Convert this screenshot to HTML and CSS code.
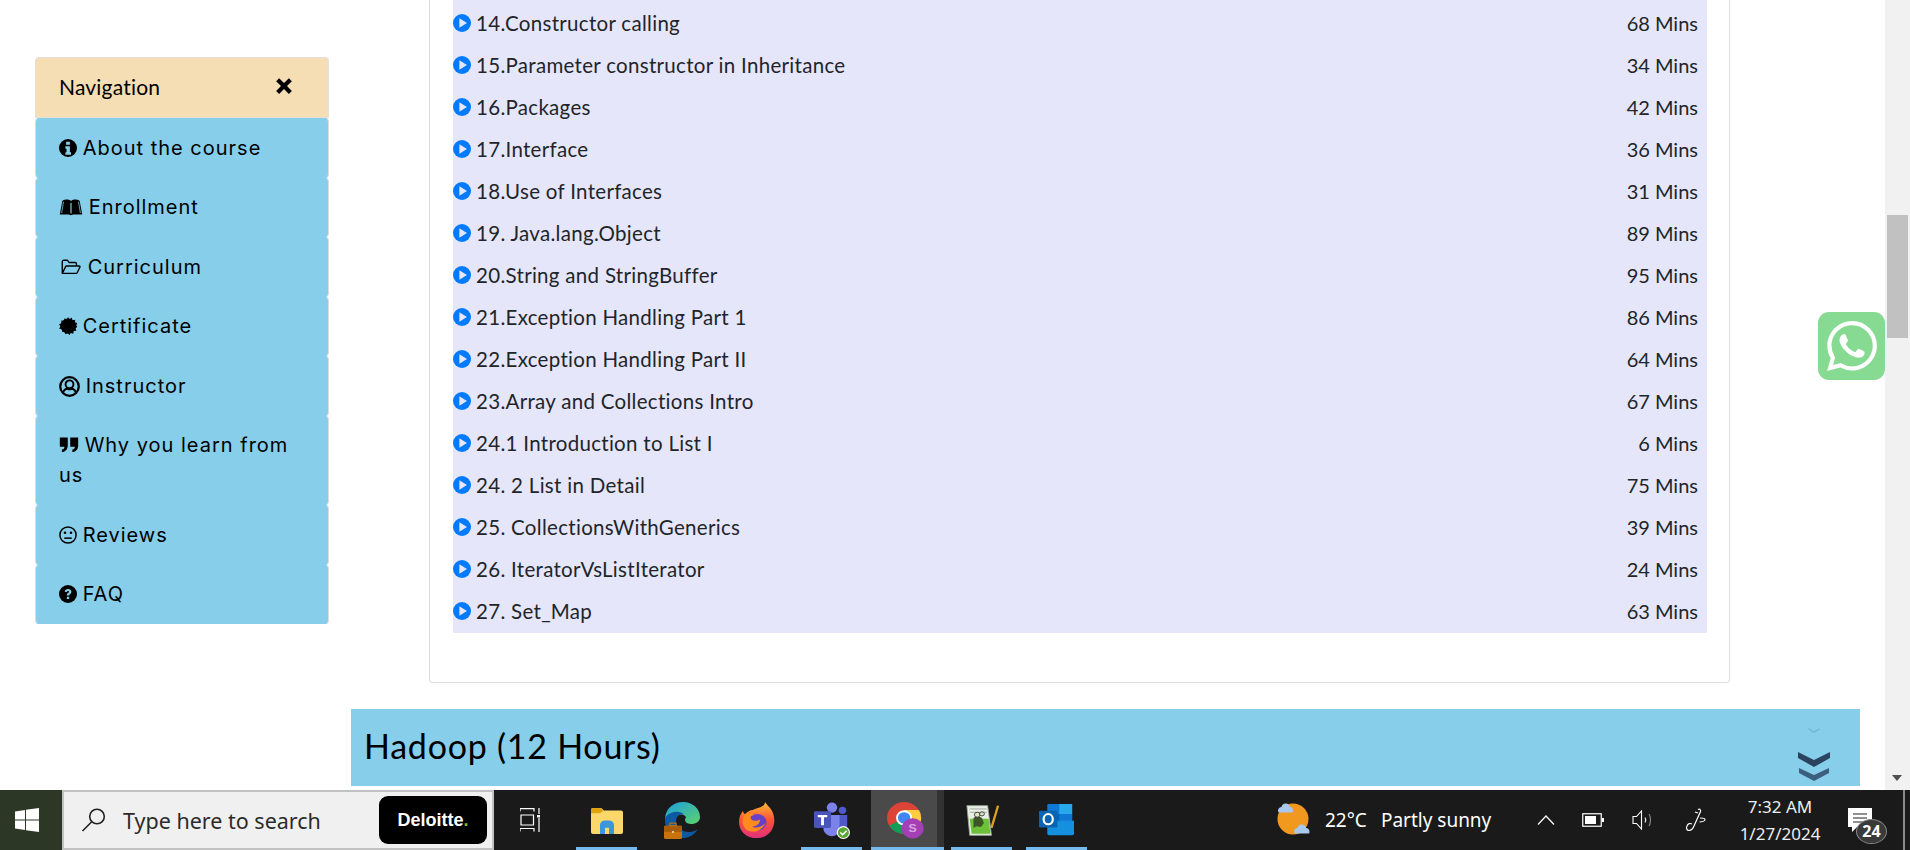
FILE: index.html
```html
<!DOCTYPE html>
<html lang="en">

<head>
    <meta charset="UTF-8">
    <meta name="viewport" content="width=device-width, initial-scale=1.0">
    <title>Course Curriculum</title>
    <link rel="stylesheet" href="styles.css">
</head>

<body>
    <svg class="defs" width="0" height="0">
        <symbol id="play" viewBox="0 0 24 24">
            <circle cx="12" cy="12" r="12" fill="#007bff" />
            <path d="M8.5 5.6 18.6 12 8.5 18.4z" fill="#e6e6fa" />
        </symbol>
    </svg>

    <div class="browser">
        <div class="page">
            <nav class="sidebar">
                <div class="nav-head">
                    <span>Navigation</span>
                    <svg class="nav-close" viewBox="0 0 24 24"><path d="M5.5 1.5 12 8l6.5-6.5 4 4L16 12l6.5 6.5-4 4L12 16l-6.500 6.500-4-4L8 12 1.500 5.500z" /></svg>
                </div>
                <a class="nav-item" href="#about">
                    <svg class="nav-icon" viewBox="0 0 24 24"><circle cx="12" cy="12" r="12" /><path d="M9.500 3.500h5v4h-5zM8.500 9.500h6v8h1.500v3.500H8.500v-3.500H10v-4.500H8.500z" fill="#87ceeb" /></svg>
                    About the course
                </a>
                <a class="nav-item" href="#enroll">
                    <svg class="nav-icon nav-icon-wide" viewBox="0 0 32 24"><path d="M1 22 4.500 3.500C8 1.500 13 1.500 16 4c3-2.500 8-2.500 11.500-.5L31 22H19l-3 1-3-1z" /><path d="M15.300 6.500v14M16.700 6.500v14" stroke="#87ceeb" stroke-width=".8" /><path d="M3.500 20 6 5" stroke="#87ceeb" stroke-width="1" /><path d="M28.500 20 26 5" stroke="#87ceeb" stroke-width="1" /></svg>
                    Enrollment
                </a>
                <a class="nav-item" href="#curriculum">
                    <svg class="nav-icon nav-icon-folder" viewBox="0 0 28 24"><path d="M3 20.500V5a2 2 0 0 1 2-2h5l2 3h8a2 2 0 0 1 2 2v3M3 20.500 7.500 11.500a1.500 1.500 0 0 1 1.300-.8H25.500c1 0 1.500.8 1 1.700l-3.600 7.200a1.500 1.500 0 0 1-1.300.9z" fill="none" stroke="#000" stroke-width="1.800" stroke-linejoin="round" /></svg>
                    Curriculum
                </a>
                <a class="nav-item" href="#certificate">
                    <svg class="nav-icon" viewBox="0 0 24 24"><circle cx="12" cy="12" r="10" /><path d="M12 0l2 3 3-2.200 1 3.500 3.600-.8-.4 3.700 3.300.7-1.600 3.100 2.100 2-2.900 1.900 1 3.400-3.600.4-.4 3.600-3.400-1-1.700 2.600-2.500-2.400-3 1.500-.9-3.500-3.600.2.400-3.600L0 15.500l2-3-2-3 3.300-1.200-.3-3.700 3.600.6.900-3.500 3 1.800z" /></svg>
                    Certificate
                </a>
                <a class="nav-item" href="#instructor">
                    <svg class="nav-icon nav-icon-user" viewBox="0 0 24 24"><circle cx="12" cy="12" r="10.600" fill="none" stroke="#000" stroke-width="2.600" /><circle cx="12" cy="9.500" r="4.500" fill="none" stroke="#000" stroke-width="2.200" /><path d="M4.500 19.500c1-3.600 3.500-5 5.300-5 1.500 1 3 1 4.400 0 1.800 0 4.300 1.400 5.300 5" fill="none" stroke="#000" stroke-width="2.200" /></svg>
                    Instructor
                </a>
                <a class="nav-item" href="#why">
                    <svg class="nav-icon nav-icon-quote" viewBox="0 0 24 20"><path d="M1 1h9.500v9.500c0 4.500-2.500 7.500-7 8v-3c2-.3 3-1.500 3-3.500H1zM13.500 1H23v9.500c0 4.500-2.500 7.500-7 8v-3c2-.3 3-1.500 3-3.500h-5.500z" /></svg>
                    Why you learn from us
                </a>
                <a class="nav-item" href="#reviews">
                    <svg class="nav-icon" viewBox="0 0 24 24"><circle cx="12" cy="12" r="10.800" fill="none" stroke="#000" stroke-width="2" /><circle cx="8" cy="9" r="1.800" /><circle cx="16" cy="9" r="1.800" /><path d="M7 16.200h10" stroke="#000" stroke-width="2" /></svg>
                    Reviews
                </a>
                <a class="nav-item" href="#faq">
                    <svg class="nav-icon" viewBox="0 0 24 24"><circle cx="12" cy="12" r="12" /><path d="M7.500 9c.3-2.600 2.200-3.800 4.600-3.800 2.500 0 4.500 1.500 4.500 3.800 0 3-3 3-3 5h-3.200c0-3.400 3-3.500 3-5 0-.7-.6-1.100-1.400-1.100-.9 0-1.400.5-1.700 1.400zM10.400 15.500h3.200v3.200h-3.200z" fill="#87ceeb" /></svg>
                    FAQ
                </a>
            </nav>

            <main class="content">
                <section class="lesson-card">
                    <ul class="lesson-list" id="lessons"></ul>
                </section>
                <div class="course-bar">
                    <h2>Hadoop (12 Hours)</h2>
                    <svg class="chevrons" viewBox="0 0 32 54">
                        <path d="M10.500 1 16 4.500 21.500 1v1.500L16 6 10.500 2.500z" fill="#6fb3d2" />
                        <path d="M0 25l16 8 16-8v6l-16 9-16-9z" fill="#2a4460" />
                        <path d="M1 41l15 7 15-7v5l-15 8-15-8z" fill="#3c5f80" />
                    </svg>
                </div>
            </main>

            <a class="whatsapp" href="#chat">
                <svg viewBox="0 0 24 24"><path fill="#fff" d="M17.472 14.382c-.297-.149-1.758-.867-2.030-.967-.273-.099-.471-.148-.670.150-.197.297-.767.966-.940 1.164-.173.199-.347.223-.644.075-.297-.150-1.255-.463-2.390-1.475-.883-.788-1.480-1.761-1.653-2.059-.173-.297-.018-.458.130-.606.134-.133.298-.347.446-.520.149-.174.198-.298.298-.497.099-.198.050-.371-.025-.520-.075-.149-.669-1.612-.916-2.207-.242-.579-.487-.500-.669-.510-.173-.008-.371-.010-.570-.010-.198 0-.520.074-.792.372-.272.297-1.040 1.016-1.040 2.479 0 1.462 1.065 2.875 1.213 3.074.149.198 2.096 3.200 5.077 4.487.709.306 1.262.489 1.694.625.712.227 1.360.195 1.871.118.571-.085 1.758-.719 2.006-1.413.248-.694.248-1.289.173-1.413-.074-.124-.272-.198-.570-.347m-5.421 7.403h-.004a9.870 9.870 0 01-5.031-1.378l-.361-.214-3.741.982.998-3.648-.235-.374a9.860 9.860 0 01-1.510-5.260c.001-5.450 4.436-9.884 9.888-9.884 2.640 0 5.122 1.030 6.988 2.898a9.825 9.825 0 012.893 6.994c-.003 5.450-4.437 9.884-9.885 9.884m8.413-18.297A11.815 11.815 0 0012.050 0C5.495 0 .160 5.335.157 11.892c0 2.096.547 4.142 1.588 5.945L.057 24l6.305-1.654a11.882 11.882 0 005.683 1.448h.005c6.554 0 11.890-5.335 11.893-11.893a11.821 11.821 0 00-3.480-8.413z" /></svg>
            </a>
        </div>

        <div class="scrollbar">
            <div class="scroll-thumb"></div>
            <div class="scroll-down"></div>
        </div>
    </div>

    <footer class="taskbar">
        <div class="start">
            <svg width="24" height="24" viewBox="0 0 24 24" fill="#fff"><path d="M0 3.400 10 2v9.500H0zM11 1.800 24 0v11.500H11zM0 12.500h10V22L0 20.600zM11 12.500h13V24l-13-1.800z" /></svg>
        </div>
        <div class="search">
            <svg class="search-icon" width="26" height="26" viewBox="0 0 26 26" fill="none" stroke="#222" stroke-width="1.600"><circle cx="16" cy="9.500" r="7.300" /><path d="M10.500 15 1.500 24" /></svg>
            <span class="search-text">Type here to search</span>
            <span class="deloitte">Deloitte<i>.</i></span>
        </div>
        <div class="task-view">
            <svg width="20" height="24" viewBox="0 0 20 24" fill="none" stroke="#fff" stroke-width="1.200"><path d="M0 3.500V.6h14v2.900M1 7h12.500v10H1zM0 23.500v-3h14v3M19 0v6M19 10v14" /><path d="M17 7h4v2.500h-4z" fill="#fff" stroke="none" /></svg>
        </div>
        <div class="apps">
            <div class="app app-explorer">
                <svg viewBox="0 0 32 30" preserveAspectRatio="none"><path d="M0 3a2 2 0 0 1 2-2h8l3 3h17a2 2 0 0 1 2 2v22a2 2 0 0 1-2 2H2a2 2 0 0 1-2-2z" fill="#fcd86a" /><path d="M0 3a2 2 0 0 1 2-2h8l3 3-4 3H0z" fill="#e0a412" /><path d="M9 30V20a5 5 0 0 1 5-5h4a5 5 0 0 1 5 5v10h-5v-7h-4v7z" fill="#3a96dd" /></svg>
                <b class="app-line"></b>
            </div>
            <div class="app">
                <svg viewBox="0 0 36 42" preserveAspectRatio="none"><path d="M1 18C2 7 10 0 19 0c10 0 17 8 17 17 0 5-4 8-9 8-4 0-6-2-6-5 0-1 1-2 1-3-2-3-6-4-10-2-5 2-8 5-11 3z" fill="url(#edge-a)" /><path d="M1 18c2-4 7-7 12-7 3 0 5 1 7 3-5-1-8 3-8 8 0 6 6 12 13 12 4 0 8-2 9-4-3 7-9 11-16 11C8 41 0 30 1 18z" fill="#0c59a4" /><rect x="0" y="27" width="18" height="15" rx="1.500" fill="#c8730c" /><rect x="0" y="27" width="18" height="7" fill="#a85c08" /><rect x="6" y="24" width="6" height="3" fill="none" stroke="#c8730c" stroke-width="1.200" /><rect x="8" y="33" width="2" height="2" fill="#f8d58a" /><defs><linearGradient id="edge-a" x1="0" y1="0" x2="1" y2="1"><stop offset="0" stop-color="#1b9de2" /><stop offset="1" stop-color="#5ed36a" /></linearGradient></defs></svg>
                <b class="app-line app-line-none"></b>
            </div>
            <div class="app">
                <svg viewBox="0 0 36 42" preserveAspectRatio="none"><path d="M26 0c2 4 8 8 9 17 2 13-6 24-17 24C7 41 0 33 0 22c0-5 2-9 4-12 0 2 1 3 2 4 2-3 5-5 8-5 4-2 12-3 12-9z" fill="url(#fox-a)" /><circle cx="18" cy="23" r="9.500" fill="#6a3fc7" /><path d="M6 14c4-2 7-1 9 1-3 0-4 2-3 4 1 3 6 3 9 1 0 5-4 8-8 8 3 2 10 1 13-4-2 8-11 12-18 8C3 28 2 20 6 14z" fill="#ff8c1c" /><defs><linearGradient id="fox-a" x1="0" y1="0" x2="0" y2="1"><stop offset="0" stop-color="#ffc02e" /><stop offset=".5" stop-color="#ff4f3b" /><stop offset="1" stop-color="#e0327a" /></linearGradient></defs></svg>
                <b class="app-line app-line-none"></b>
            </div>
            <div class="app">
                <svg viewBox="0 0 38 40" preserveAspectRatio="none"><circle cx="19" cy="6" r="5.500" fill="#7b83eb" /><circle cx="30" cy="9" r="4" fill="#5059c9" /><path d="M24 14h11v11c0 5-4 7-7 7z" fill="#5059c9" /><path d="M10 14h17v15c0 5-4 8-8 8-5 0-9-4-9-8z" fill="#7b83eb" /><rect x="0" y="10" width="18" height="18" rx="1.500" fill="#4b53bc" /><path d="M4 14h10v2.500h-3.500V25h-3v-8.500H4z" fill="#fff" /><circle cx="31" cy="33" r="7" fill="#fff" /><circle cx="31" cy="33" r="5.800" fill="#5aa632" /><path d="M27.800 33l2.400 2.400 4.200-4.400" fill="none" stroke="#fff" stroke-width="1.600" /></svg>
                <b class="app-line"></b>
            </div>
            <div class="app app-active">
                <svg viewBox="0 0 40 42" preserveAspectRatio="none"><circle cx="18" cy="18" r="18" fill="#db4437" /><path d="M18 18 2.400 27A18 18 0 0 0 18 36l9-18z" fill="#0f9d58" /><path d="M18 18h17.800A18 18 0 0 0 33.600 9H18zM18 18l9 0-9 18A18 18 0 0 0 36 18z" fill="#ffcd40" /><circle cx="18" cy="18" r="8.500" fill="#fff" /><circle cx="18" cy="18" r="6.500" fill="#4285f4" /><circle cx="27" cy="30" r="11.500" fill="#a43fb5" /><text class="profile-s" x="27" y="34.500" text-anchor="middle">S</text></svg>
                <b class="app-line"></b>
            </div>
            <div class="app app-notepad">
                <svg viewBox="0 0 36 40" preserveAspectRatio="none"><path d="M2 2h22l4 36H5z" fill="#e8efe5" stroke="#9aa39a" /><path d="M5 6h18M5 10h18" stroke="#9aa39a" /><path d="M5 18h20l2 18H7z" fill="#6cc03a" /><path d="M9 17c3-3 7-2 9 0l2 6-3 5-5-1-3 2z" fill="#3d5527" /><circle cx="13" cy="13" r="3" fill="#dfe6c8" stroke="#333" /><circle cx="18" cy="12" r="2.500" fill="#dfe6c8" stroke="#333" /><path d="M28 29 35 2" stroke="#d9a21f" stroke-width="2.500" /></svg>
                <b class="app-line"></b>
            </div>
            <div class="app app-outlook">
                <svg viewBox="0 0 38 38" preserveAspectRatio="none"><rect x="9" y="0" width="27" height="24" rx="1.500" fill="#0f78d4" /><rect x="22" y="0" width="14" height="12" fill="#28a8ea" /><rect x="22" y="12" width="14" height="12" fill="#0f78d4" /><rect x="9" y="12" width="13" height="12" fill="#0364b8" /><path d="M9 20h29v15a2 2 0 0 1-2 2H11a2 2 0 0 1-2-2z" fill="#1490df" /><rect x="0" y="8" width="20" height="20" rx="1.500" fill="#0a64b0" /><ellipse cx="10" cy="18" rx="5" ry="6" fill="none" stroke="#fff" stroke-width="2.400" /></svg>
                <b class="app-line"></b>
            </div>
        </div>
        <div class="weather">
            <svg width="36" height="36" viewBox="0 0 36 36"><circle cx="17" cy="17" r="15.500" fill="#f0991e" /><path d="M2 9c0-3 2-4 3.500-4C6 2.500 8 1 10 1.500c2 0 3.500 1.500 4 3.500 2 0 3 1.500 3 4 0 1-.5 1.500-1.500 1.500H4C3 10.500 2 10 2 9zM18 30c0-3 2-4 3.500-4 .5-2.500 2.500-4 4.500-3.500 2 0 3.500 1.500 4 3.500 2 0 3.500 1.500 3.500 4 0 1-.5 1.500-1.500 1.500H20c-1 0-2-.5-2-1.500z" fill="#a8c8ee" /></svg>
            <span class="temp">22°C</span>
            <span class="sky">Partly sunny</span>
        </div>
        <div class="tray">
            <svg class="tray-chevron" width="18" height="10" viewBox="0 0 18 10" fill="none" stroke="#fff" stroke-width="1.200"><path d="M1 9.500 9 1l8 8.500" /></svg>
            <svg class="tray-battery" width="22" height="14" viewBox="0 0 22 14"><rect x=".75" y=".75" width="18.500" height="12.500" fill="none" stroke="#fff" stroke-width="1.200" /><rect x="3" y="3" width="11" height="8" fill="#fff" /><rect x="20" y="5" width="2" height="4" fill="#fff" /></svg>
            <svg class="tray-volume" width="22" height="20" viewBox="0 0 22 20" fill="none" stroke="#fff" stroke-width="1.100"><path d="M1 6.500h3.500L9.500 1v18l-5-5.500H1z" /><path d="M13 7.500c1 1.500 1 3.500 0 5" /><path d="M17 4c2 3 2 9 0 12" stroke="#888" /></svg>
            <svg class="tray-pen" width="22" height="24" viewBox="0 0 22 24" fill="none" stroke="#fff" stroke-width="1.200"><path d="M13 1.500c2-1 3 .5 2.500 2L9 18c-1 2.500-2.500 4.500-5 4.500-2.500 0-3-2.500-2-4.500 1-2.500 3-3 5-2" /><path d="M10 4l3 1M15 10c3 0 5 0 5 1.500S17 14 14.500 14" /></svg>
        </div>
        <div class="clock">
            <span>7:32 AM</span>
            <span>1/27/2024</span>
        </div>
        <div class="notify">
            <svg class="notify-msg" width="24" height="24" viewBox="0 0 24 24"><path d="M0 0h24v19H9l-5 5v-5H0z" fill="#fff" /><path d="M5 6h14M5 10h14M5 14h14" stroke="#222" stroke-width="1.200" /></svg>
            <span class="notify-badge">24</span>
        </div>
    </footer>

    <script>
        const lessons = [
            ['14.Constructor calling', 68],
            ['15.Parameter constructor in Inheritance', 34],
            ['16.Packages', 42],
            ['17.Interface', 36],
            ['18.Use of Interfaces', 31],
            ['19. Java.lang.Object', 89],
            ['20.String and StringBuffer', 95],
            ['21.Exception Handling Part 1', 86],
            ['22.Exception Handling Part II', 64],
            ['23.Array and Collections Intro', 67],
            ['24.1 Introduction to List I', 6],
            ['24. 2 List in Detail', 75],
            ['25. CollectionsWithGenerics', 39],
            ['26. IteratorVsListIterator', 24],
            ['27. Set_Map', 63]
        ];

        // Build the rows of the lesson table
        const list = document.getElementById('lessons');
        lessons.forEach(function (lesson) {
            const row = document.createElement('li');
            row.className = 'lesson-row';
            row.innerHTML = '<svg class="play-icon"><use href="#play"></use></svg>' +
                '<span class="lesson-name">' + lesson[0] + '</span>' +
                '<span class="lesson-time">' + lesson[1] + ' Mins</span>';
            list.appendChild(row);
        });
    </script>
</body>

</html>
```

FILE: styles.css
```css
* {
    box-sizing: border-box;
}

body {
    margin: 0;
    padding: 0;
    height: 850px;
    overflow: hidden;
    background-color: #fff;
    color: #212529;
    font-family: "Lato", "Open Sans", sans-serif;
}

.defs {
    position: absolute;
}

.browser {
    display: flex;
    height: 790px;
}

.page {
    position: relative;
    flex: 1;
    display: flex;
    align-items: flex-start;
    overflow: hidden;
    background-color: #fff;
}

/* sidebar */
.sidebar {
    width: 294px;
    margin: 57px 0 0 35px;
    flex-shrink: 0;
    font-family: "Inter", sans-serif;
}

.nav-head {
    display: flex;
    justify-content: space-between;
    align-items: center;
    height: 61px;
    padding: 0 35px 3px 23px;
    background-color: #f5deb3;
    border: 1px solid #e4e0d6;
    border-radius: 4px 4px 0 0;
    color: #000;
    font-family: "Lato", sans-serif;
    font-size: 21px;
    letter-spacing: 0.2px;
}

.nav-close {
    width: 18px;
    height: 18px;
}

.nav-item {
    display: block;
    padding: 13.75px 23px;
    background-color: #87ceeb;
    border: 1px solid #dcdcdc;
    border-top-color: #87ceeb;
    border-bottom-color: #87ceeb;
    border-radius: 4px;
    color: #000;
    font-size: 20px;
    font-weight: 400;
    letter-spacing: 1px;
    line-height: 30px;
    text-decoration: none;
}

.nav-icon {
    width: 18px;
    height: 18px;
    margin-right: -1px;
    vertical-align: -2px;
}

.nav-icon-wide {
    width: 24px;
}

.nav-icon-folder {
    width: 23px;
}

.nav-icon-user {
    width: 21px;
    height: 21px;
    vertical-align: -4px;
}

.nav-icon-quote {
    width: 20px;
}

/* main column */
.content {
    width: 1509px;
    margin-left: 22px;
    flex-shrink: 0;
}

.lesson-card {
    width: 1301px;
    height: 683px;
    margin: 0 0 26px 78px;
    padding: 0 22px 0 23px;
    border: 1px solid #ddd;
    border-top: 0;
    border-radius: 0 0 4px 4px;
}

.lesson-list {
    list-style: none;
    margin: 0;
    padding: 2px 9px 1px 0;
    background-color: #e6e6fa;
}

.lesson-row {
    display: flex;
    align-items: center;
    height: 42px;
    font-size: 20.5px;
    letter-spacing: 0.3px;
}

.play-icon {
    width: 18px;
    height: 18px;
    margin: -1px 5px 0 0;
    flex-shrink: 0;
}

.lesson-name {
    flex: 1;
    margin-top: -1px;
}

.lesson-time {
    margin-top: -1px;
    font-size: 20px;
    letter-spacing: 0;
}

.course-bar {
    position: relative;
    display: flex;
    align-items: center;
    height: 77px;
    padding: 0 0 4px 13px;
    background-color: #87ceeb;
}

.course-bar h2 {
    margin: 0;
    color: #000;
    font-size: 34px;
    font-weight: 400;
    letter-spacing: 0.75px;
}

.chevrons {
    position: absolute;
    left: 1447px;
    top: 18px;
    width: 32px;
    height: 54px;
}

.whatsapp {
    position: absolute;
    left: 1818px;
    top: 312px;
    display: flex;
    align-items: center;
    justify-content: center;
    width: 67px;
    height: 68px;
    background-color: #86da92;
    border-radius: 11px;
}

.whatsapp svg {
    width: 50px;
    height: 50px;
}

/* scrollbar */
.scrollbar {
    position: relative;
    width: 25px;
    background-color: #f1f1f1;
}

.scroll-thumb {
    width: 21px;
    height: 123px;
    margin: 215px 0 0 2px;
    background-color: #c1c1c1;
}

.scroll-down {
    position: absolute;
    left: 7px;
    bottom: 9px;
    border-top: 6px solid #505050;
    border-left: 5.5px solid transparent;
    border-right: 5.5px solid transparent;
}

/* windows taskbar */
.taskbar {
    display: flex;
    align-items: stretch;
    height: 60px;
    background-color: #1a1a1a;
    color: #fff;
    font-family: "Noto Sans", "Open Sans", sans-serif;
}

.start {
    display: flex;
    align-items: center;
    justify-content: center;
    width: 62px;
    padding-right: 9px;
    background-color: #2d3725;
}

.search {
    display: flex;
    align-items: center;
    width: 432px;
    padding: 0 5px 0 17px;
    background-color: #f0f0f0;
    border: 2px solid #c2c2c2;
    color: #2b2b2b;
}

.search-icon {
    flex-shrink: 0;
}

.search-text {
    flex: 1;
    margin-left: 16px;
    font-size: 21.5px;
}

.deloitte {
    display: flex;
    align-items: center;
    justify-content: center;
    width: 108px;
    height: 48px;
    background-color: #000;
    border-radius: 9px;
    color: #fff;
    font-family: "Liberation Sans", sans-serif;
    font-size: 18px;
    font-weight: 700;
}

.deloitte i {
    color: #86bc25;
    font-style: normal;
}

.task-view {
    display: flex;
    align-items: center;
    justify-content: center;
    width: 68px;
    padding-left: 4px;
}

.apps {
    display: flex;
    width: 714px;
    padding-left: 7px;
}

.app {
    position: relative;
    display: flex;
    align-items: center;
    justify-content: center;
    width: 75px;
}

.app svg {
    width: 36px;
    height: 37px;
}

.app-explorer svg {
    width: 32px;
    height: 27px;
}

.app-notepad svg {
    width: 34px;
    height: 33px;
}

.app-outlook svg {
    width: 35px;
    height: 32px;
}

.app-line {
    position: absolute;
    left: 7px;
    right: 7px;
    bottom: 0;
    height: 3px;
    background-color: #76b9ed;
}

.app-line-none {
    background-color: transparent;
}

.app-active {
    width: 73px;
    margin-left: 2px;
    padding-left: 4px;
    background-color: #4a4a4a;
    border-right: 7px solid #333;
}

.app-active .app-line {
    left: 0;
    right: -7px;
}

.app-active svg {
    width: 38px;
}

.profile-s {
    fill: #d9a4e0;
    font-family: "Liberation Sans", sans-serif;
    font-size: 13px;
    font-weight: 700;
}

.weather {
    display: flex;
    align-items: center;
    width: 261px;
    font-size: 19px;
}

.temp {
    margin-left: 13px;
}

.sky {
    margin-left: 14px;
}

.tray {
    display: flex;
    align-items: center;
    width: 188px;
}

.tray-battery {
    margin-left: 27px;
}

.tray-volume {
    margin-left: 28px;
}

.tray-pen {
    margin-left: 31px;
}

.clock {
    display: flex;
    flex-direction: column;
    align-items: center;
    justify-content: center;
    width: 110px;
    gap: 8px;
    color: #eee;
    font-size: 17px;
    line-height: 19px;
}

.notify {
    position: relative;
    flex: 1;
    border-right: 2px solid #8a8a8a;
    margin-right: 5px;
}

.notify-msg {
    position: absolute;
    left: 13px;
    top: 18px;
}

.notify-badge {
    position: absolute;
    left: 21px;
    top: 29px;
    width: 31px;
    height: 25px;
    background-color: #3a3a3a;
    border: 1px solid #888;
    border-radius: 50%;
    color: #fff;
    font-size: 16px;
    font-weight: 700;
    line-height: 23px;
    text-align: center;
}
```
